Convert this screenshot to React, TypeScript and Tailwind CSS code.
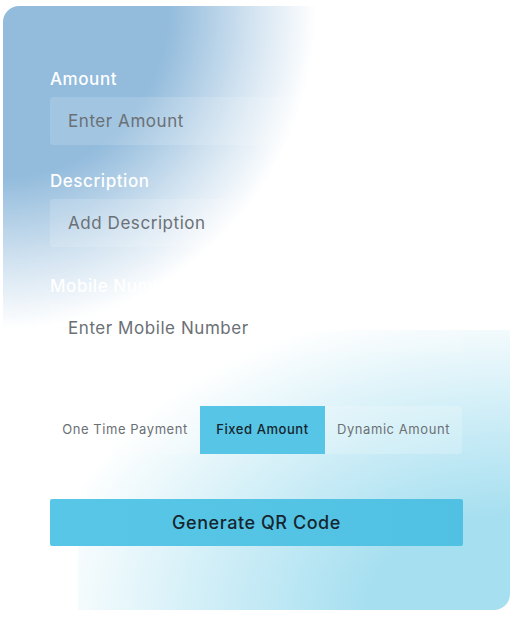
import React from "react";

const font = { fontFamily: "Inter, 'Open Sans', sans-serif", letterSpacing: "0.035em" };

const labelClass = "block text-[17px] leading-6 font-medium text-white";
const inputClass =
  "mt-[6px] block h-12 w-full rounded-[3px] bg-white/15 px-[18px] text-[17px] text-[#55595e] outline-none placeholder:text-[#6b7075]";

function Field({ label, placeholder, className = "" }: { label: string; placeholder: string; className?: string }) {
  return (
    <div className={className}>
      <label className={labelClass}>{label}</label>
      <input className={inputClass} placeholder={placeholder} />
    </div>
  );
}

const tabs = [
  { name: "One Time Payment", w: "w-[150px]" },
  { name: "Fixed Amount", w: "w-[125px]" },
  { name: "Dynamic Amount", w: "flex-1" },
];

export default function App() {
  const active = "Fixed Amount";
  return (
    <div className="h-[617px] w-full bg-white pl-[3px] pt-[6px]" style={font}>
      <div className="relative h-[604px] w-[507px] overflow-hidden rounded-2xl bg-white">
        {/* soft colour washes behind the form */}
        <div className="pointer-events-none absolute left-0 top-0 h-[326px] w-[360px] bg-[radial-gradient(ellipse_330px_340px_at_0_0,#92bbdc_0%,#92bbdc_50%,rgba(146,187,220,0.42)_75%,rgba(146,187,220,0)_95%)]" />
        <div className="pointer-events-none absolute bottom-0 right-0 h-[280px] w-[432px] bg-[radial-gradient(ellipse_470px_310px_at_100%_100%,#a6dff0_0%,#a6dff0_30%,rgba(166,223,240,0.5)_66%,rgba(166,223,240,0)_100%)]" />

        <form className="relative w-[460px] pl-[47px] pt-[61px]" onSubmit={(e) => e.preventDefault()}>
          <Field label="Amount" placeholder="Enter Amount" />
          <Field label="Description" placeholder="Add Description" className="mt-6" />
          <Field label="Mobile Number" placeholder="Enter Mobile Number" className="mt-[27px]" />

          <label className={`${labelClass} mt-[26px]`}>Payment Type</label>
          <div className="mt-1 flex h-12 w-[412px] rounded-[3px] bg-white/20">
            {tabs.map((t) => (
              <button
                key={t.name}
                type="button"
                className={`${t.w} h-full text-[13px] ${
                  t.name === active ? "bg-[#56c5e6] font-medium text-[#16242c]" : "text-[#6b7075]"
                }`}
              >
                {t.name}
              </button>
            ))}
          </div>

          <button
            type="submit"
            className="mt-[45px] h-[47px] w-[413px] rounded-[2px] bg-gradient-to-r from-[#58c7e7] to-[#51c1e3] text-[18px] font-medium text-[#17262e]"
          >
            Generate QR Code
          </button>
        </form>
      </div>
    </div>
  );
}
